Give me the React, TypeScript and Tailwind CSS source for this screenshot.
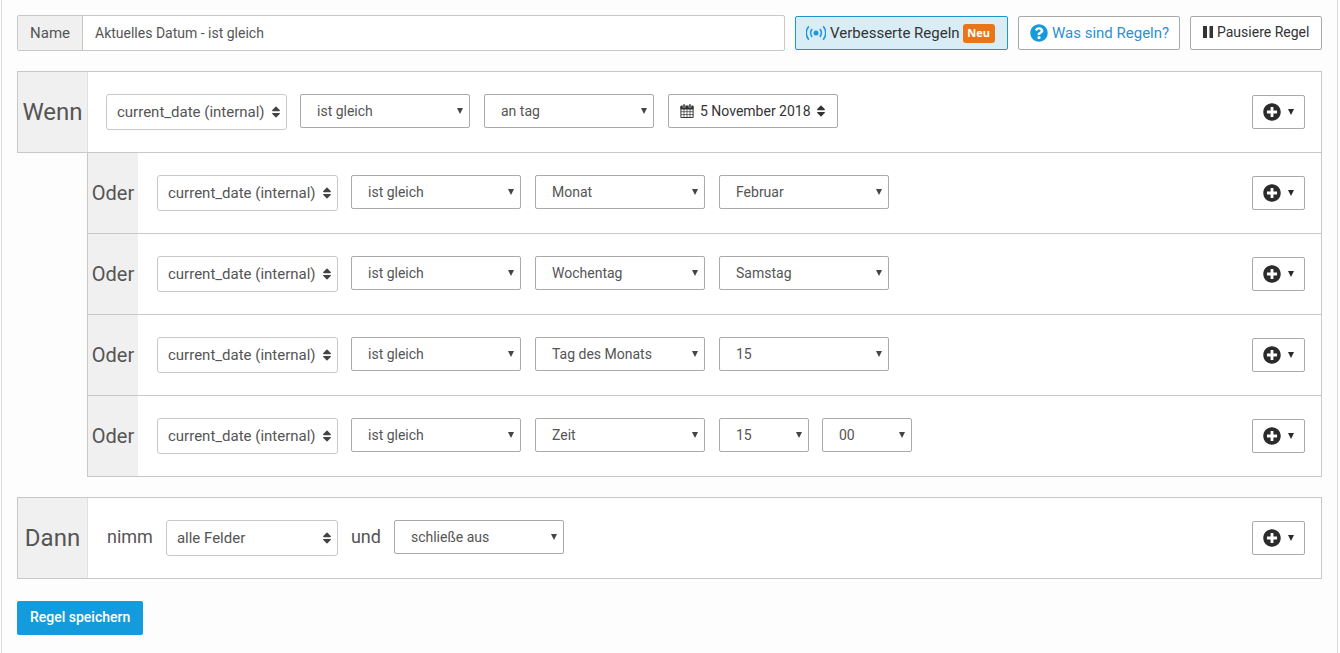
import type { ReactNode } from "react";
import { FaPlusCircle, FaQuestionCircle, FaSort } from "react-icons/fa";

type Field = { label: string; options: string[]; size?: "wide" | "narrow" };

const comparison: Field = { label: "Vergleich", options: ["ist gleich", "ist nicht gleich"] };

const alternatives: Field[][] = [
  [comparison, { label: "Einheit", options: ["Monat"] }, { label: "Monat", options: ["Februar"] }],
  [comparison, { label: "Einheit", options: ["Wochentag"] }, { label: "Wochentag", options: ["Samstag"] }],
  [comparison, { label: "Einheit", options: ["Tag des Monats"] }, { label: "Tag", options: ["15"] }],
  [
    comparison,
    { label: "Einheit", options: ["Zeit"] },
    { label: "Stunde", options: ["15"], size: "narrow" },
    { label: "Minute", options: ["00"], size: "narrow" },
  ],
];

function Caret() {
  return (
    <svg viewBox="0 0 6 6" className="h-[6px] w-[6px]" fill="currentColor" aria-hidden="true">
      <path d="M0 0h6L3 6z" />
    </svg>
  );
}

function Select({ label, options, size = "wide" }: Field) {
  return (
    <span className={size === "wide" ? "relative mr-px w-[170px]" : "relative w-[90px]"}>
      <select
        aria-label={label}
        className="block h-[34px] w-full appearance-none rounded-xs border border-[#a9a9ae] bg-white pl-4 text-sm text-[#555]"
      >
        {options.map((o) => (
          <option key={o}>{o}</option>
        ))}
      </select>
      <span className="pointer-events-none absolute top-[14px] right-[7px] text-[#444]">
        <Caret />
      </span>
    </span>
  );
}

function Combo({ children, className }: { children: ReactNode; className: string }) {
  return (
    <button
      type="button"
      aria-haspopup="listbox"
      className={`flex h-9 items-center justify-between rounded-[3px] border border-[#c8c8c8] bg-white pr-1 pl-[10px] text-[15px] leading-5 text-[#555] ${className}`}
    >
      {children}
      <FaSort className="h-[14px] w-3 text-[#444]" />
    </button>
  );
}

function AddButton() {
  return (
    <button
      type="button"
      aria-label="Hinzufügen"
      className="mt-px flex h-[34px] w-[53px] items-center justify-center gap-[7px] rounded-xs border border-[#a9a9ae] bg-white text-[#2b2b2b]"
    >
      <FaPlusCircle className="h-[18px] w-[18px]" />
      <Caret />
    </button>
  );
}

function CalendarIcon() {
  return (
    <svg viewBox="0 0 14 14" className="h-[14px] w-[14px]" fill="none" stroke="currentColor" aria-hidden="true">
      <path d="M1 2h12v3H1z" fill="currentColor" />
      <path d="M0.9 2.5h12.2v11H0.9z" />
      <path d="M4 5v8.5M7 5v8.5M10 5v8.5M1 7.7h12M1 10.6h12" strokeWidth="0.7" />
      <path d="M4 0.2v3.4M10 0.2v3.4" stroke="#fff" strokeWidth="2.6" />
      <path d="M4 0.2v3.2M10 0.2v3.2" strokeWidth="1.5" />
    </svg>
  );
}

function BroadcastIcon() {
  return (
    <svg viewBox="0 0 20 16" className="h-4 w-5" fill="none" stroke="currentColor" aria-hidden="true">
      <circle cx="10" cy="8" r="2.5" fill="currentColor" stroke="none" />
      <path d="M6.2 4.2a5.6 5.6 0 0 0 0 7.6M13.8 4.2a5.6 5.6 0 0 1 0 7.6" strokeWidth="1.7" />
      <path d="M2.8 1.2a10.6 10.6 0 0 0 0 13.6M17.2 1.2a10.6 10.6 0 0 1 0 13.6" strokeWidth="1.5" />
    </svg>
  );
}

function RowBody({ children, indent = "pl-[19px]" }: { children: ReactNode; indent?: string }) {
  return (
    <div className={`flex flex-1 items-start justify-between pt-[22px] pr-4 ${indent}`}>
      <div className="flex items-start gap-[13px]">{children}</div>
      <AddButton />
    </div>
  );
}

export default function App() {
  return (
    <div className="min-h-screen bg-[#fdfdfd] px-px font-['Roboto',sans-serif] text-sm text-[#555]">
      <main className="mr-px min-h-screen border-x border-[#dcdcdc] px-[15px] pt-[15px]">
        <form onSubmit={(e) => e.preventDefault()}>
          <header className="flex items-start gap-[10px]">
            <div className="flex h-9 flex-1 rounded-xs border border-[#c8c8c8] bg-white">
              <label
                htmlFor="rule-name"
                className="flex w-[65px] items-center justify-center border-r border-[#c8c8c8] bg-[#f0f0f0] text-[15px] leading-5"
              >
                Name
              </label>
              <input
                id="rule-name"
                defaultValue="Aktuelles Datum - ist gleich"
                className="min-w-0 flex-1 px-3 text-sm"
              />
            </div>
            <button
              type="button"
              className="mt-px flex h-[34px] w-[213px] items-center rounded-xs border border-[#1e97cd] bg-[#d9edf7] pl-[10px] text-[#333]"
            >
              <span className="text-[#1e97dc]">
                <BroadcastIcon />
              </span>
              <span className="ml-1 text-[15px] leading-5">Verbesserte Regeln</span>
              <span className="ml-[3px] flex h-[19px] w-8 items-center justify-center rounded-[3px] bg-[#e8751a] font-['Open_Sans',sans-serif] text-[11px] font-bold text-white">
                Neu
              </span>
            </button>
            <a
              href="#hilfe"
              className="mt-px flex h-[34px] w-[162px] items-center gap-1 rounded-xs border border-[#a9a9ae] bg-white pl-[11px] text-[15px] leading-5 text-[#2e8fcf]"
            >
              <FaQuestionCircle className="h-[18px] w-[18px] text-[#149bdb]" />
              Was sind Regeln?
            </a>
            <button
              type="button"
              className="mt-px flex h-[34px] w-[132px] items-center gap-1 rounded-xs border border-[#a9a9ae] bg-white pb-[2px] pl-3 text-[#333]"
            >
              <svg viewBox="0 0 10 12" className="h-3 w-[10px]" fill="currentColor" aria-hidden="true">
                <path d="M0 0h4v12H0zM6.5 0h3.5v12H6.5z" />
              </svg>
              Pausiere Regel
            </button>
          </header>

          <section className="mt-5 flex h-[82px] border border-[#c8c8c8] bg-white">
            <h2 className="flex w-[70px] items-center justify-center border-r border-[#e0e0e0] bg-[#f0f0f0] text-2xl">Wenn</h2>
            <RowBody indent="pl-[18px]">
              <Combo className="w-[181px]">current_date (internal)</Combo>
              <Select {...comparison} />
              <Select label="Einheit" options={["an tag"]} />
              <button
                type="button"
                className="flex h-[34px] w-[170px] items-center rounded-xs border border-[#a9a9ae] bg-white pl-[11px] text-[#333]"
              >
                <CalendarIcon />
                <span className="ml-[6px]">5 November 2018</span>
                <FaSort className="ml-1 h-[14px] w-3" />
              </button>
            </RowBody>
          </section>

          {alternatives.map((fields, i) => (
            <section key={i} className="ml-[70px] flex h-[81px] border border-t-0 border-[#c8c8c8] bg-white">
              <h3 className="flex w-[50px] items-center justify-center bg-[#f0f0f0] text-xl">Oder</h3>
              <RowBody>
                <Combo className="w-[181px]">current_date (internal)</Combo>
                {fields.map((f, j) => (
                  <Select key={j} {...f} />
                ))}
              </RowBody>
            </section>
          ))}

          <section className="mt-5 flex h-[82px] border border-[#c8c8c8] bg-white">
            <h2 className="flex w-[70px] items-center justify-center border-r border-[#e0e0e0] bg-[#f0f0f0] text-2xl">Dann</h2>
            <RowBody>
              <span className="text-lg leading-[34px]">nimm</span>
              <Combo className="w-[172px]">alle Felder</Combo>
              <span className="text-lg leading-[34px]">und</span>
              <Select label="Aktion" options={["schließe aus"]} />
            </RowBody>
          </section>

          <button
            type="submit"
            className="mt-[22px] h-[34px] rounded-xs bg-[#149bdb] px-[13px] pb-[2px] font-medium text-white"
          >
            Regel speichern
          </button>
        </form>
      </main>
    </div>
  );
}
